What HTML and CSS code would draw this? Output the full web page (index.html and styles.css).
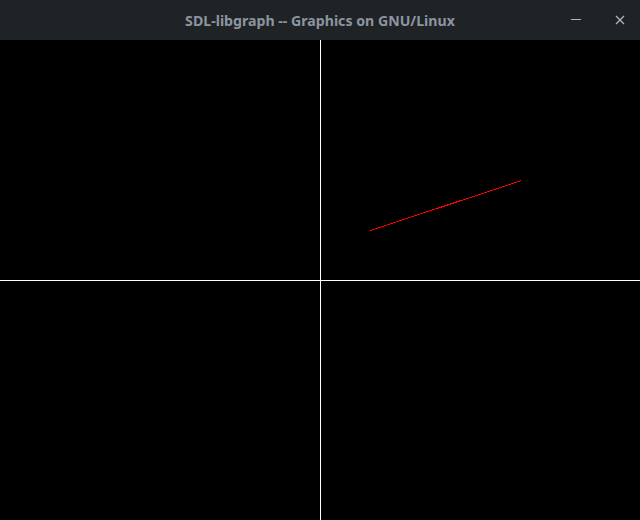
FILE: index.html
```html
<!DOCTYPE html>
<html>
<head>
<meta charset="utf-8">
<link rel="stylesheet" href="styles.css">
</head>
<body>
<div class="window">
  <header class="titlebar">
    <span class="title">SDL-libgraph -- Graphics on GNU/Linux</span>
    <div class="controls">
      <svg class="btn" width="20" height="20" viewBox="0 0 20 20"><line x1="5" y1="9.5" x2="15" y2="9.5" stroke="#b4b8bc" stroke-width="1"/></svg>
      <svg class="btn" width="20" height="20" viewBox="0 0 20 20"><path d="M6 6 L14 14 M14 6 L6 14" stroke="#b4b8bc" stroke-width="1.2" fill="none"/></svg>
    </div>
  </header>
  <svg class="canvas" width="640" height="480" viewBox="0 0 640 480" shape-rendering="crispEdges">
    <rect width="640" height="480" fill="#000"/>
    <rect x="320" y="0" width="1" height="480" fill="#fff"/>
    <rect x="0" y="240" width="640" height="1" fill="#fff"/>
    <line x1="370.5" y1="190.5" x2="521.5" y2="140.5" stroke="#ff0000" stroke-width="1"/>
  </svg>
</div>
</body>
</html>
```
FILE: styles.css
```css
html, body {
  margin: 0;
  padding: 0;
  background: #000;
}
.window {
  width: 640px;
  height: 520px;
  display: flex;
  flex-direction: column;
}
.titlebar {
  height: 40px;
  background: #202326;
  display: flex;
  align-items: center;
  justify-content: center;
  position: relative;
  flex: none;
}
.title {
  font-family: "Noto Sans", "DejaVu Sans", sans-serif;
  font-weight: bold;
  font-size: 14.15px;
  color: #8b95a0;
}
.controls {
  position: absolute;
  right: 10px;
  top: 10px;
  display: flex;
  gap: 24px;
}
.btn {
  display: block;
}
.canvas {
  display: block;
  flex: none;
}
```
